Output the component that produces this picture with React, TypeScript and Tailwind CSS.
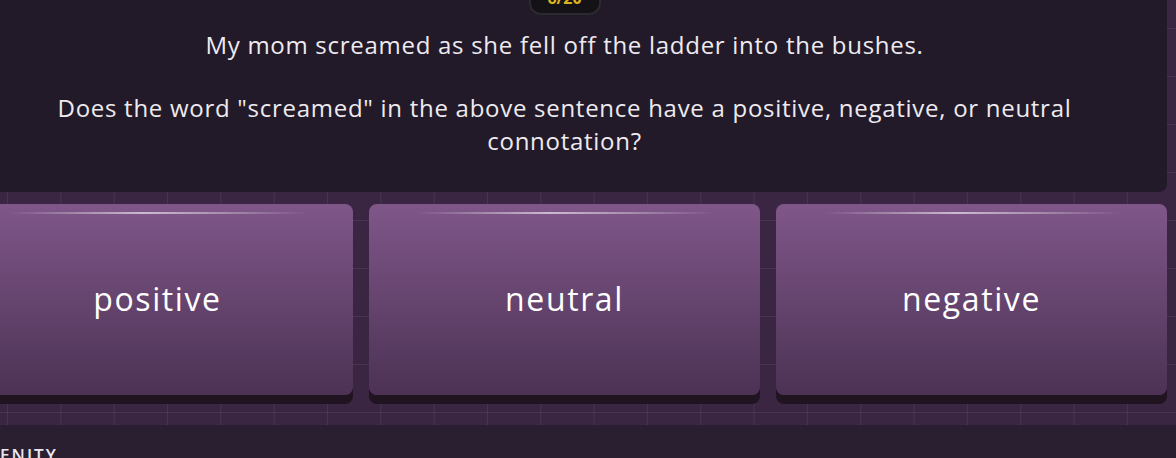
export default function App() {
  const answers = ['positive', 'neutral', 'negative'];

  return (
    <div className="relative h-[458px] w-[1176px] overflow-hidden bg-[#2a1f31] font-['Open_Sans','Noto_Sans',sans-serif] text-[#eeeaf0]">
      <div className="h-[425px] bg-[#3a2543] bg-[linear-gradient(to_right,rgba(255,255,255,0.07)_1px,transparent_1px),linear-gradient(to_bottom,rgba(255,255,255,0.07)_1px,transparent_1px)] bg-[size:53.33px_48px] bg-[position:7px_28px]">
        <div className="ml-[-38px] w-[1205px]">
          <section className="relative h-[192px] rounded-b-lg bg-[#221a28] px-4 pt-[28px] text-center text-[24px] leading-[33px] tracking-[0.03em]">
            <div className="absolute left-1/2 top-[-16px] flex h-[31px] w-[72px] -translate-x-1/2 items-end justify-center rounded-[12px] border-2 border-[#2b2a2e] bg-[#141216] pb-[7px] text-[16px] leading-none font-bold tracking-normal text-[#d9b51f]">
              6/20
            </div>
            <p>My mom screamed as she fell off the ladder into the bushes.</p>
            <p className="mt-[30px]">
              Does the word "screamed" in the above sentence have a positive, negative, or neutral
              <br />
              connotation?
            </p>
          </section>

          <div className="mt-[12px] grid grid-cols-3 gap-4">
            {answers.map((a) => (
              <button
                key={a}
                type="button"
                className="relative flex h-[191px] items-center justify-center rounded-lg bg-[linear-gradient(to_bottom,#7f5789,#4c3254)] pb-[2px] text-[32px] tracking-[0.05em] text-white shadow-[0_9px_0_#201420]"
              >
                <span className="absolute left-1/2 top-[8px] h-[2px] w-[300px] -translate-x-1/2 bg-[linear-gradient(to_right,transparent,rgba(255,255,255,0.6)_45%,rgba(255,255,255,0.35)_70%,transparent)]" />
                {a}
              </button>
            ))}
          </div>
        </div>
      </div>

      <div className="pt-[21px] text-[17px] font-semibold uppercase leading-none tracking-[0.12em] text-[#ece6f0]">
        ENITY
      </div>
    </div>
  );
}
